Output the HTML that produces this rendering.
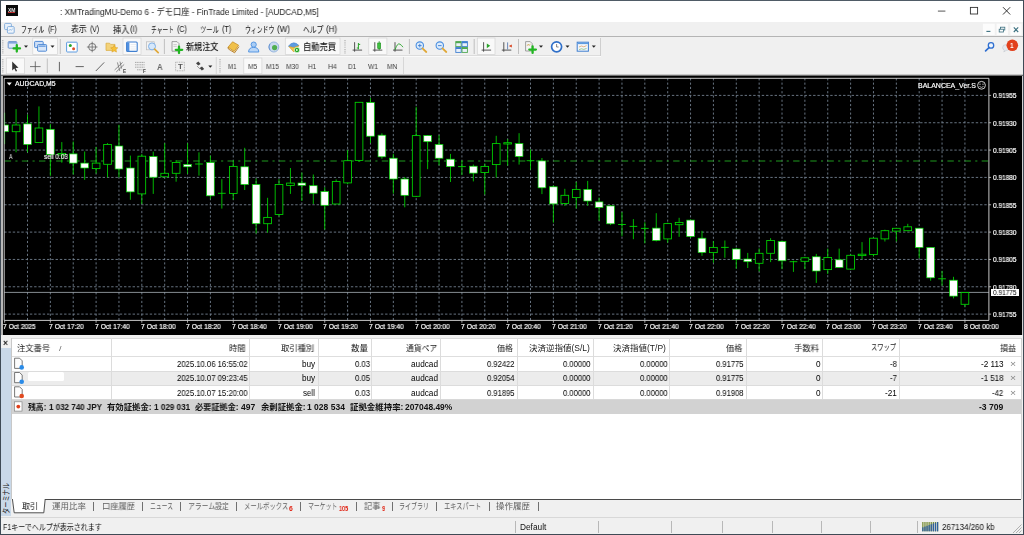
<!DOCTYPE html><html lang="ja"><head><meta charset="utf-8"><title>MT4</title><style>
html,body{margin:0;padding:0;background:#f0f0f0;}
#app{position:relative;width:1024px;height:535px;overflow:hidden;background:#f0f0f0;font-family:"Liberation Sans","Noto Sans CJK JP",sans-serif;-webkit-font-smoothing:antialiased;}
#app div{position:absolute;}
#app span.t{position:absolute;white-space:nowrap;transform-origin:0 50%;will-change:transform;}
</style></head><body><div id="app">
<div style="left:0.00px;top:0.00px;width:1024.00px;height:22.00px;background:#fff;"></div>
<div style="left:6.30px;top:5.00px;width:11.50px;height:11.30px;background:#0a0a0a;"></div>
<div style="left:8.40px;top:12.30px;width:7.00px;height:0.80px;background:#c03030;"></div>
<div style="left:0.00px;top:22.00px;width:1024.00px;height:14.30px;background:#f0f0f0;"></div>
<div style="left:0.00px;top:36.10px;width:1024.00px;height:0.90px;background:#b4b4b4;"></div>
<div style="left:0.00px;top:37.00px;width:1024.00px;height:39.00px;background:#f0f0f0;"></div>
<div style="left:0.00px;top:55.30px;width:600.50px;height:0.80px;background:#dcdcdc;"></div>
<div style="left:0.00px;top:56.10px;width:600.50px;height:0.70px;background:#fafafa;"></div>
<div style="left:600.30px;top:37.50px;width:0.80px;height:18.00px;background:#cfcfcf;"></div>
<div style="left:0.00px;top:74.40px;width:1024.00px;height:0.80px;background:#c8c8c8;"></div>
<div style="left:0.00px;top:75.10px;width:1024.00px;height:1.20px;background:#6e6e6e;"></div>
<div style="left:1.20px;top:76.00px;width:1.40px;height:259.00px;background:#b8b8b8;"></div>
<div style="left:2.50px;top:76.20px;width:1019.20px;height:258.70px;background:#000;"></div>
<svg width="1024" height="535" viewBox="0 0 1024 535" style="position:absolute;left:0;top:0">
<line x1="27.50" y1="78.30" x2="27.50" y2="320.40" stroke="#73808f" stroke-width="0.9" stroke-dasharray="2.14 2.14"/>
<line x1="50.37" y1="78.30" x2="50.37" y2="320.40" stroke="#73808f" stroke-width="0.9" stroke-dasharray="2.14 2.14"/>
<line x1="73.23" y1="78.30" x2="73.23" y2="320.40" stroke="#73808f" stroke-width="0.9" stroke-dasharray="2.14 2.14"/>
<line x1="96.10" y1="78.30" x2="96.10" y2="320.40" stroke="#73808f" stroke-width="0.9" stroke-dasharray="2.14 2.14"/>
<line x1="118.96" y1="78.30" x2="118.96" y2="320.40" stroke="#73808f" stroke-width="0.9" stroke-dasharray="2.14 2.14"/>
<line x1="141.82" y1="78.30" x2="141.82" y2="320.40" stroke="#73808f" stroke-width="0.9" stroke-dasharray="2.14 2.14"/>
<line x1="164.69" y1="78.30" x2="164.69" y2="320.40" stroke="#73808f" stroke-width="0.9" stroke-dasharray="2.14 2.14"/>
<line x1="187.55" y1="78.30" x2="187.55" y2="320.40" stroke="#73808f" stroke-width="0.9" stroke-dasharray="2.14 2.14"/>
<line x1="210.42" y1="78.30" x2="210.42" y2="320.40" stroke="#73808f" stroke-width="0.9" stroke-dasharray="2.14 2.14"/>
<line x1="233.28" y1="78.30" x2="233.28" y2="320.40" stroke="#73808f" stroke-width="0.9" stroke-dasharray="2.14 2.14"/>
<line x1="256.14" y1="78.30" x2="256.14" y2="320.40" stroke="#73808f" stroke-width="0.9" stroke-dasharray="2.14 2.14"/>
<line x1="279.01" y1="78.30" x2="279.01" y2="320.40" stroke="#73808f" stroke-width="0.9" stroke-dasharray="2.14 2.14"/>
<line x1="301.87" y1="78.30" x2="301.87" y2="320.40" stroke="#73808f" stroke-width="0.9" stroke-dasharray="2.14 2.14"/>
<line x1="324.74" y1="78.30" x2="324.74" y2="320.40" stroke="#73808f" stroke-width="0.9" stroke-dasharray="2.14 2.14"/>
<line x1="347.60" y1="78.30" x2="347.60" y2="320.40" stroke="#73808f" stroke-width="0.9" stroke-dasharray="2.14 2.14"/>
<line x1="370.46" y1="78.30" x2="370.46" y2="320.40" stroke="#73808f" stroke-width="0.9" stroke-dasharray="2.14 2.14"/>
<line x1="393.33" y1="78.30" x2="393.33" y2="320.40" stroke="#73808f" stroke-width="0.9" stroke-dasharray="2.14 2.14"/>
<line x1="416.19" y1="78.30" x2="416.19" y2="320.40" stroke="#73808f" stroke-width="0.9" stroke-dasharray="2.14 2.14"/>
<line x1="439.06" y1="78.30" x2="439.06" y2="320.40" stroke="#73808f" stroke-width="0.9" stroke-dasharray="2.14 2.14"/>
<line x1="461.92" y1="78.30" x2="461.92" y2="320.40" stroke="#73808f" stroke-width="0.9" stroke-dasharray="2.14 2.14"/>
<line x1="484.78" y1="78.30" x2="484.78" y2="320.40" stroke="#73808f" stroke-width="0.9" stroke-dasharray="2.14 2.14"/>
<line x1="507.65" y1="78.30" x2="507.65" y2="320.40" stroke="#73808f" stroke-width="0.9" stroke-dasharray="2.14 2.14"/>
<line x1="530.51" y1="78.30" x2="530.51" y2="320.40" stroke="#73808f" stroke-width="0.9" stroke-dasharray="2.14 2.14"/>
<line x1="553.38" y1="78.30" x2="553.38" y2="320.40" stroke="#73808f" stroke-width="0.9" stroke-dasharray="2.14 2.14"/>
<line x1="576.24" y1="78.30" x2="576.24" y2="320.40" stroke="#73808f" stroke-width="0.9" stroke-dasharray="2.14 2.14"/>
<line x1="599.10" y1="78.30" x2="599.10" y2="320.40" stroke="#73808f" stroke-width="0.9" stroke-dasharray="2.14 2.14"/>
<line x1="621.97" y1="78.30" x2="621.97" y2="320.40" stroke="#73808f" stroke-width="0.9" stroke-dasharray="2.14 2.14"/>
<line x1="644.83" y1="78.30" x2="644.83" y2="320.40" stroke="#73808f" stroke-width="0.9" stroke-dasharray="2.14 2.14"/>
<line x1="667.70" y1="78.30" x2="667.70" y2="320.40" stroke="#73808f" stroke-width="0.9" stroke-dasharray="2.14 2.14"/>
<line x1="690.56" y1="78.30" x2="690.56" y2="320.40" stroke="#73808f" stroke-width="0.9" stroke-dasharray="2.14 2.14"/>
<line x1="713.42" y1="78.30" x2="713.42" y2="320.40" stroke="#73808f" stroke-width="0.9" stroke-dasharray="2.14 2.14"/>
<line x1="736.29" y1="78.30" x2="736.29" y2="320.40" stroke="#73808f" stroke-width="0.9" stroke-dasharray="2.14 2.14"/>
<line x1="759.15" y1="78.30" x2="759.15" y2="320.40" stroke="#73808f" stroke-width="0.9" stroke-dasharray="2.14 2.14"/>
<line x1="782.02" y1="78.30" x2="782.02" y2="320.40" stroke="#73808f" stroke-width="0.9" stroke-dasharray="2.14 2.14"/>
<line x1="804.88" y1="78.30" x2="804.88" y2="320.40" stroke="#73808f" stroke-width="0.9" stroke-dasharray="2.14 2.14"/>
<line x1="827.74" y1="78.30" x2="827.74" y2="320.40" stroke="#73808f" stroke-width="0.9" stroke-dasharray="2.14 2.14"/>
<line x1="850.61" y1="78.30" x2="850.61" y2="320.40" stroke="#73808f" stroke-width="0.9" stroke-dasharray="2.14 2.14"/>
<line x1="873.47" y1="78.30" x2="873.47" y2="320.40" stroke="#73808f" stroke-width="0.9" stroke-dasharray="2.14 2.14"/>
<line x1="896.34" y1="78.30" x2="896.34" y2="320.40" stroke="#73808f" stroke-width="0.9" stroke-dasharray="2.14 2.14"/>
<line x1="919.20" y1="78.30" x2="919.20" y2="320.40" stroke="#73808f" stroke-width="0.9" stroke-dasharray="2.14 2.14"/>
<line x1="942.06" y1="78.30" x2="942.06" y2="320.40" stroke="#73808f" stroke-width="0.9" stroke-dasharray="2.14 2.14"/>
<line x1="964.93" y1="78.30" x2="964.93" y2="320.40" stroke="#73808f" stroke-width="0.9" stroke-dasharray="2.14 2.14"/>
<line x1="4.20" y1="95.40" x2="988.90" y2="95.40" stroke="#73808f" stroke-width="0.9" stroke-dasharray="2.4 1.88"/>
<line x1="988.90" y1="95.40" x2="991.10" y2="95.40" stroke="#d0d0d0" stroke-width="0.8"/>
<line x1="4.20" y1="122.74" x2="988.90" y2="122.74" stroke="#73808f" stroke-width="0.9" stroke-dasharray="2.4 1.88"/>
<line x1="988.90" y1="122.74" x2="991.10" y2="122.74" stroke="#d0d0d0" stroke-width="0.8"/>
<line x1="4.20" y1="150.08" x2="988.90" y2="150.08" stroke="#73808f" stroke-width="0.9" stroke-dasharray="2.4 1.88"/>
<line x1="988.90" y1="150.08" x2="991.10" y2="150.08" stroke="#d0d0d0" stroke-width="0.8"/>
<line x1="4.20" y1="177.42" x2="988.90" y2="177.42" stroke="#73808f" stroke-width="0.9" stroke-dasharray="2.4 1.88"/>
<line x1="988.90" y1="177.42" x2="991.10" y2="177.42" stroke="#d0d0d0" stroke-width="0.8"/>
<line x1="4.20" y1="204.76" x2="988.90" y2="204.76" stroke="#73808f" stroke-width="0.9" stroke-dasharray="2.4 1.88"/>
<line x1="988.90" y1="204.76" x2="991.10" y2="204.76" stroke="#d0d0d0" stroke-width="0.8"/>
<line x1="4.20" y1="232.10" x2="988.90" y2="232.10" stroke="#73808f" stroke-width="0.9" stroke-dasharray="2.4 1.88"/>
<line x1="988.90" y1="232.10" x2="991.10" y2="232.10" stroke="#d0d0d0" stroke-width="0.8"/>
<line x1="4.20" y1="259.44" x2="988.90" y2="259.44" stroke="#73808f" stroke-width="0.9" stroke-dasharray="2.4 1.88"/>
<line x1="988.90" y1="259.44" x2="991.10" y2="259.44" stroke="#d0d0d0" stroke-width="0.8"/>
<line x1="4.20" y1="286.78" x2="988.90" y2="286.78" stroke="#73808f" stroke-width="0.9" stroke-dasharray="2.4 1.88"/>
<line x1="988.90" y1="286.78" x2="991.10" y2="286.78" stroke="#d0d0d0" stroke-width="0.8"/>
<line x1="4.20" y1="314.12" x2="988.90" y2="314.12" stroke="#73808f" stroke-width="0.9" stroke-dasharray="2.4 1.88"/>
<line x1="988.90" y1="314.12" x2="991.10" y2="314.12" stroke="#d0d0d0" stroke-width="0.8"/>
<line x1="4.20" y1="160.95" x2="988.90" y2="160.95" stroke="#1f9a1f" stroke-width="1.1" stroke-dasharray="6.4 4.3 2.14 4.3" stroke-dashoffset="-0.5"/>
<line x1="4.20" y1="292.40" x2="988.90" y2="292.40" stroke="#a8b0b8" stroke-width="0.8"/>
<clipPath id="cp"><rect x="4.20" y="78.30" width="984.70" height="242.10"/></clipPath><g clip-path="url(#cp)">
<line x1="4.64" y1="112.70" x2="4.64" y2="144.10" stroke="#00d800" stroke-width="0.85"/>
<rect x="0.79" y="125.00" width="7.70" height="6.70" fill="#fff" stroke="#00d800" stroke-width="0.7"/>
<line x1="16.07" y1="109.10" x2="16.07" y2="152.30" stroke="#00d800" stroke-width="0.85"/>
<rect x="12.22" y="125.00" width="7.70" height="6.70" fill="#000" stroke="#00d800" stroke-width="0.85"/>
<line x1="27.50" y1="114.60" x2="27.50" y2="152.30" stroke="#00d800" stroke-width="0.85"/>
<rect x="23.65" y="123.90" width="7.70" height="20.60" fill="#fff" stroke="#00d800" stroke-width="0.7"/>
<line x1="38.94" y1="106.40" x2="38.94" y2="142.70" stroke="#00d800" stroke-width="0.85"/>
<rect x="35.09" y="128.00" width="7.70" height="14.50" fill="#000" stroke="#00d800" stroke-width="0.85"/>
<line x1="50.37" y1="124.00" x2="50.37" y2="175.90" stroke="#00d800" stroke-width="0.85"/>
<rect x="46.52" y="129.30" width="7.70" height="25.20" fill="#fff" stroke="#00d800" stroke-width="0.7"/>
<line x1="61.80" y1="142.10" x2="61.80" y2="162.70" stroke="#00d800" stroke-width="0.85"/>
<rect x="57.95" y="153.50" width="7.70" height="1.50" fill="#000" stroke="#00d800" stroke-width="0.85"/>
<line x1="73.23" y1="141.50" x2="73.23" y2="174.50" stroke="#00d800" stroke-width="0.85"/>
<rect x="69.38" y="153.90" width="7.70" height="9.20" fill="#fff" stroke="#00d800" stroke-width="0.7"/>
<line x1="84.66" y1="151.50" x2="84.66" y2="179.80" stroke="#00d800" stroke-width="0.85"/>
<rect x="80.81" y="163.10" width="7.70" height="4.90" fill="#fff" stroke="#00d800" stroke-width="0.7"/>
<line x1="96.10" y1="147.00" x2="96.10" y2="173.50" stroke="#00d800" stroke-width="0.85"/>
<rect x="92.25" y="163.10" width="7.70" height="5.50" fill="#000" stroke="#00d800" stroke-width="0.85"/>
<line x1="107.53" y1="143.10" x2="107.53" y2="177.40" stroke="#00d800" stroke-width="0.85"/>
<rect x="103.68" y="144.50" width="7.70" height="19.80" fill="#000" stroke="#00d800" stroke-width="0.85"/>
<line x1="118.96" y1="124.80" x2="118.96" y2="177.40" stroke="#00d800" stroke-width="0.85"/>
<rect x="115.11" y="146.00" width="7.70" height="23.00" fill="#fff" stroke="#00d800" stroke-width="0.7"/>
<line x1="130.39" y1="155.60" x2="130.39" y2="199.80" stroke="#00d800" stroke-width="0.85"/>
<rect x="126.54" y="168.00" width="7.70" height="23.90" fill="#fff" stroke="#00d800" stroke-width="0.7"/>
<line x1="141.82" y1="154.00" x2="141.82" y2="204.10" stroke="#00d800" stroke-width="0.85"/>
<rect x="137.97" y="156.20" width="7.70" height="37.70" fill="#000" stroke="#00d800" stroke-width="0.85"/>
<line x1="153.26" y1="151.70" x2="153.26" y2="193.90" stroke="#00d800" stroke-width="0.85"/>
<rect x="149.41" y="156.60" width="7.70" height="20.60" fill="#fff" stroke="#00d800" stroke-width="0.7"/>
<line x1="164.69" y1="143.20" x2="164.69" y2="177.20" stroke="#00d800" stroke-width="0.85"/>
<rect x="160.84" y="173.30" width="7.70" height="3.50" fill="#000" stroke="#00d800" stroke-width="0.85"/>
<line x1="176.12" y1="160.10" x2="176.12" y2="181.70" stroke="#00d800" stroke-width="0.85"/>
<rect x="172.27" y="162.50" width="7.70" height="10.80" fill="#000" stroke="#00d800" stroke-width="0.85"/>
<line x1="187.55" y1="143.20" x2="187.55" y2="173.90" stroke="#00d800" stroke-width="0.85"/>
<rect x="183.70" y="164.40" width="7.70" height="2.40" fill="#fff" stroke="#00d800" stroke-width="0.7"/>
<line x1="198.98" y1="152.30" x2="198.98" y2="175.60" stroke="#00d800" stroke-width="0.85"/>
<line x1="195.13" y1="164.00" x2="202.83" y2="164.00" stroke="#00d800" stroke-width="0.9"/>
<line x1="210.42" y1="155.60" x2="210.42" y2="198.80" stroke="#00d800" stroke-width="0.85"/>
<rect x="206.57" y="162.50" width="7.70" height="33.30" fill="#fff" stroke="#00d800" stroke-width="0.7"/>
<line x1="221.85" y1="179.20" x2="221.85" y2="208.60" stroke="#00d800" stroke-width="0.85"/>
<line x1="218.00" y1="193.30" x2="225.70" y2="193.30" stroke="#00d800" stroke-width="0.9"/>
<line x1="233.28" y1="160.50" x2="233.28" y2="199.80" stroke="#00d800" stroke-width="0.85"/>
<rect x="229.43" y="166.40" width="7.70" height="27.10" fill="#000" stroke="#00d800" stroke-width="0.85"/>
<line x1="244.71" y1="147.80" x2="244.71" y2="190.00" stroke="#00d800" stroke-width="0.85"/>
<rect x="240.86" y="166.80" width="7.70" height="17.70" fill="#fff" stroke="#00d800" stroke-width="0.7"/>
<line x1="256.14" y1="178.60" x2="256.14" y2="233.50" stroke="#00d800" stroke-width="0.85"/>
<rect x="252.29" y="184.50" width="7.70" height="39.20" fill="#fff" stroke="#00d800" stroke-width="0.7"/>
<line x1="267.58" y1="197.80" x2="267.58" y2="232.70" stroke="#00d800" stroke-width="0.85"/>
<rect x="263.73" y="217.40" width="7.70" height="6.30" fill="#000" stroke="#00d800" stroke-width="0.85"/>
<line x1="279.01" y1="179.20" x2="279.01" y2="216.50" stroke="#00d800" stroke-width="0.85"/>
<rect x="275.16" y="184.50" width="7.70" height="30.00" fill="#000" stroke="#00d800" stroke-width="0.85"/>
<line x1="290.44" y1="168.00" x2="290.44" y2="193.90" stroke="#00d800" stroke-width="0.85"/>
<rect x="286.59" y="183.10" width="7.70" height="2.30" fill="#000" stroke="#00d800" stroke-width="0.85"/>
<line x1="301.87" y1="172.50" x2="301.87" y2="201.00" stroke="#00d800" stroke-width="0.85"/>
<rect x="298.02" y="183.00" width="7.70" height="2.30" fill="#fff" stroke="#00d800" stroke-width="0.7"/>
<line x1="313.30" y1="174.50" x2="313.30" y2="204.00" stroke="#00d800" stroke-width="0.85"/>
<rect x="309.45" y="185.70" width="7.70" height="7.50" fill="#fff" stroke="#00d800" stroke-width="0.7"/>
<line x1="324.74" y1="187.30" x2="324.74" y2="229.50" stroke="#00d800" stroke-width="0.85"/>
<rect x="320.89" y="191.60" width="7.70" height="13.70" fill="#fff" stroke="#00d800" stroke-width="0.7"/>
<line x1="336.17" y1="179.40" x2="336.17" y2="204.00" stroke="#00d800" stroke-width="0.85"/>
<rect x="332.32" y="181.50" width="7.70" height="22.50" fill="#000" stroke="#00d800" stroke-width="0.85"/>
<line x1="347.60" y1="150.00" x2="347.60" y2="184.30" stroke="#00d800" stroke-width="0.85"/>
<rect x="343.75" y="160.70" width="7.70" height="22.20" fill="#000" stroke="#00d800" stroke-width="0.85"/>
<line x1="359.03" y1="102.30" x2="359.03" y2="161.70" stroke="#00d800" stroke-width="0.85"/>
<rect x="355.18" y="102.30" width="7.70" height="58.10" fill="#000" stroke="#00d800" stroke-width="0.85"/>
<line x1="370.46" y1="97.90" x2="370.46" y2="143.10" stroke="#00d800" stroke-width="0.85"/>
<rect x="366.61" y="102.50" width="7.70" height="33.70" fill="#fff" stroke="#00d800" stroke-width="0.7"/>
<line x1="381.90" y1="133.30" x2="381.90" y2="158.80" stroke="#00d800" stroke-width="0.85"/>
<rect x="378.05" y="135.20" width="7.70" height="21.60" fill="#fff" stroke="#00d800" stroke-width="0.7"/>
<line x1="393.33" y1="153.90" x2="393.33" y2="193.60" stroke="#00d800" stroke-width="0.85"/>
<rect x="389.48" y="158.20" width="7.70" height="20.80" fill="#fff" stroke="#00d800" stroke-width="0.7"/>
<line x1="404.76" y1="177.00" x2="404.76" y2="207.30" stroke="#00d800" stroke-width="0.85"/>
<rect x="400.91" y="179.00" width="7.70" height="16.30" fill="#fff" stroke="#00d800" stroke-width="0.7"/>
<line x1="416.19" y1="106.80" x2="416.19" y2="197.10" stroke="#00d800" stroke-width="0.85"/>
<rect x="412.34" y="135.60" width="7.70" height="60.70" fill="#000" stroke="#00d800" stroke-width="0.85"/>
<line x1="427.62" y1="135.20" x2="427.62" y2="169.20" stroke="#00d800" stroke-width="0.85"/>
<rect x="423.77" y="135.60" width="7.70" height="6.10" fill="#fff" stroke="#00d800" stroke-width="0.7"/>
<line x1="439.06" y1="135.20" x2="439.06" y2="165.30" stroke="#00d800" stroke-width="0.85"/>
<rect x="435.21" y="144.50" width="7.70" height="13.70" fill="#fff" stroke="#00d800" stroke-width="0.7"/>
<line x1="450.49" y1="153.90" x2="450.49" y2="182.00" stroke="#00d800" stroke-width="0.85"/>
<rect x="446.64" y="159.20" width="7.70" height="7.40" fill="#fff" stroke="#00d800" stroke-width="0.7"/>
<line x1="461.92" y1="160.80" x2="461.92" y2="175.10" stroke="#00d800" stroke-width="0.85"/>
<line x1="458.07" y1="166.60" x2="465.77" y2="166.60" stroke="#00d800" stroke-width="0.9"/>
<line x1="473.35" y1="164.50" x2="473.35" y2="181.40" stroke="#00d800" stroke-width="0.85"/>
<rect x="469.50" y="166.20" width="7.70" height="6.90" fill="#fff" stroke="#00d800" stroke-width="0.7"/>
<line x1="484.78" y1="163.50" x2="484.78" y2="194.50" stroke="#00d800" stroke-width="0.85"/>
<rect x="480.93" y="166.40" width="7.70" height="6.10" fill="#000" stroke="#00d800" stroke-width="0.85"/>
<line x1="496.22" y1="135.80" x2="496.22" y2="177.60" stroke="#00d800" stroke-width="0.85"/>
<rect x="492.37" y="143.60" width="7.70" height="21.00" fill="#000" stroke="#00d800" stroke-width="0.85"/>
<line x1="507.65" y1="139.10" x2="507.65" y2="165.60" stroke="#00d800" stroke-width="0.85"/>
<rect x="503.80" y="142.70" width="7.70" height="1.30" fill="#000" stroke="#00d800" stroke-width="0.85"/>
<line x1="519.08" y1="133.20" x2="519.08" y2="164.60" stroke="#00d800" stroke-width="0.85"/>
<rect x="515.23" y="143.60" width="7.70" height="12.80" fill="#fff" stroke="#00d800" stroke-width="0.7"/>
<line x1="530.51" y1="149.50" x2="530.51" y2="169.70" stroke="#00d800" stroke-width="0.85"/>
<line x1="526.66" y1="160.70" x2="534.36" y2="160.70" stroke="#00d800" stroke-width="0.9"/>
<line x1="541.94" y1="158.00" x2="541.94" y2="194.10" stroke="#00d800" stroke-width="0.85"/>
<rect x="538.09" y="160.90" width="7.70" height="26.90" fill="#fff" stroke="#00d800" stroke-width="0.7"/>
<line x1="553.38" y1="185.50" x2="553.38" y2="222.70" stroke="#00d800" stroke-width="0.85"/>
<rect x="549.53" y="186.80" width="7.70" height="17.10" fill="#fff" stroke="#00d800" stroke-width="0.7"/>
<line x1="564.81" y1="188.80" x2="564.81" y2="205.90" stroke="#00d800" stroke-width="0.85"/>
<rect x="560.96" y="195.30" width="7.70" height="8.20" fill="#000" stroke="#00d800" stroke-width="0.85"/>
<line x1="576.24" y1="181.90" x2="576.24" y2="208.40" stroke="#00d800" stroke-width="0.85"/>
<rect x="572.39" y="189.40" width="7.70" height="8.20" fill="#000" stroke="#00d800" stroke-width="0.85"/>
<line x1="587.67" y1="180.90" x2="587.67" y2="205.90" stroke="#00d800" stroke-width="0.85"/>
<rect x="583.82" y="189.40" width="7.70" height="11.60" fill="#fff" stroke="#00d800" stroke-width="0.7"/>
<line x1="599.10" y1="197.60" x2="599.10" y2="220.80" stroke="#00d800" stroke-width="0.85"/>
<rect x="595.25" y="201.90" width="7.70" height="5.50" fill="#fff" stroke="#00d800" stroke-width="0.7"/>
<line x1="610.54" y1="205.10" x2="610.54" y2="225.10" stroke="#00d800" stroke-width="0.85"/>
<rect x="606.69" y="205.90" width="7.70" height="17.90" fill="#fff" stroke="#00d800" stroke-width="0.7"/>
<line x1="621.97" y1="212.10" x2="621.97" y2="236.20" stroke="#00d800" stroke-width="0.85"/>
<line x1="618.12" y1="224.50" x2="625.82" y2="224.50" stroke="#00d800" stroke-width="0.9"/>
<line x1="633.40" y1="219.10" x2="633.40" y2="239.20" stroke="#00d800" stroke-width="0.85"/>
<line x1="629.55" y1="226.40" x2="637.25" y2="226.40" stroke="#00d800" stroke-width="0.9"/>
<line x1="644.83" y1="222.30" x2="644.83" y2="243.30" stroke="#00d800" stroke-width="0.85"/>
<line x1="640.98" y1="228.40" x2="648.68" y2="228.40" stroke="#00d800" stroke-width="0.9"/>
<line x1="656.26" y1="213.20" x2="656.26" y2="241.40" stroke="#00d800" stroke-width="0.85"/>
<rect x="652.41" y="228.10" width="7.70" height="12.30" fill="#fff" stroke="#00d800" stroke-width="0.7"/>
<line x1="667.70" y1="222.70" x2="667.70" y2="242.70" stroke="#00d800" stroke-width="0.85"/>
<rect x="663.85" y="223.60" width="7.70" height="15.30" fill="#000" stroke="#00d800" stroke-width="0.85"/>
<line x1="679.13" y1="217.80" x2="679.13" y2="236.80" stroke="#00d800" stroke-width="0.85"/>
<rect x="675.28" y="222.40" width="7.70" height="2.30" fill="#000" stroke="#00d800" stroke-width="0.85"/>
<line x1="690.56" y1="219.50" x2="690.56" y2="238.00" stroke="#00d800" stroke-width="0.85"/>
<rect x="686.71" y="220.10" width="7.70" height="16.40" fill="#fff" stroke="#00d800" stroke-width="0.7"/>
<line x1="701.99" y1="230.80" x2="701.99" y2="255.80" stroke="#00d800" stroke-width="0.85"/>
<rect x="698.14" y="238.20" width="7.70" height="14.30" fill="#fff" stroke="#00d800" stroke-width="0.7"/>
<line x1="713.42" y1="241.10" x2="713.42" y2="262.70" stroke="#00d800" stroke-width="0.85"/>
<rect x="709.57" y="247.40" width="7.70" height="5.20" fill="#000" stroke="#00d800" stroke-width="0.85"/>
<line x1="724.86" y1="240.50" x2="724.86" y2="257.80" stroke="#00d800" stroke-width="0.85"/>
<line x1="721.01" y1="247.40" x2="728.71" y2="247.40" stroke="#00d800" stroke-width="0.9"/>
<line x1="736.29" y1="248.00" x2="736.29" y2="268.60" stroke="#00d800" stroke-width="0.85"/>
<rect x="732.44" y="249.00" width="7.70" height="10.40" fill="#fff" stroke="#00d800" stroke-width="0.7"/>
<line x1="747.72" y1="252.90" x2="747.72" y2="268.00" stroke="#00d800" stroke-width="0.85"/>
<rect x="743.87" y="259.00" width="7.70" height="2.70" fill="#fff" stroke="#00d800" stroke-width="0.7"/>
<line x1="759.15" y1="248.40" x2="759.15" y2="271.50" stroke="#00d800" stroke-width="0.85"/>
<rect x="755.30" y="253.30" width="7.70" height="10.00" fill="#000" stroke="#00d800" stroke-width="0.85"/>
<line x1="770.58" y1="238.20" x2="770.58" y2="262.10" stroke="#00d800" stroke-width="0.85"/>
<rect x="766.73" y="240.50" width="7.70" height="12.80" fill="#000" stroke="#00d800" stroke-width="0.85"/>
<line x1="782.02" y1="240.50" x2="782.02" y2="269.20" stroke="#00d800" stroke-width="0.85"/>
<rect x="778.17" y="241.50" width="7.70" height="19.30" fill="#fff" stroke="#00d800" stroke-width="0.7"/>
<line x1="793.45" y1="260.80" x2="793.45" y2="271.90" stroke="#00d800" stroke-width="0.85"/>
<line x1="789.60" y1="261.70" x2="797.30" y2="261.70" stroke="#00d800" stroke-width="0.9"/>
<line x1="804.88" y1="256.80" x2="804.88" y2="269.20" stroke="#00d800" stroke-width="0.85"/>
<rect x="801.03" y="257.80" width="7.70" height="3.50" fill="#000" stroke="#00d800" stroke-width="0.85"/>
<line x1="816.31" y1="253.90" x2="816.31" y2="282.90" stroke="#00d800" stroke-width="0.85"/>
<rect x="812.46" y="256.80" width="7.70" height="14.20" fill="#fff" stroke="#00d800" stroke-width="0.7"/>
<line x1="827.74" y1="248.60" x2="827.74" y2="274.00" stroke="#00d800" stroke-width="0.85"/>
<rect x="823.89" y="257.50" width="7.70" height="12.10" fill="#000" stroke="#00d800" stroke-width="0.85"/>
<line x1="839.18" y1="248.60" x2="839.18" y2="267.60" stroke="#00d800" stroke-width="0.85"/>
<rect x="835.33" y="259.80" width="7.70" height="7.60" fill="#fff" stroke="#00d800" stroke-width="0.7"/>
<line x1="850.61" y1="254.30" x2="850.61" y2="270.00" stroke="#00d800" stroke-width="0.85"/>
<rect x="846.76" y="255.30" width="7.70" height="13.80" fill="#000" stroke="#00d800" stroke-width="0.85"/>
<line x1="862.04" y1="242.10" x2="862.04" y2="259.20" stroke="#00d800" stroke-width="0.85"/>
<rect x="858.19" y="254.20" width="7.70" height="1.40" fill="#000" stroke="#00d800" stroke-width="0.85"/>
<line x1="873.47" y1="237.60" x2="873.47" y2="256.60" stroke="#00d800" stroke-width="0.85"/>
<rect x="869.62" y="238.20" width="7.70" height="16.40" fill="#000" stroke="#00d800" stroke-width="0.85"/>
<line x1="884.90" y1="229.70" x2="884.90" y2="241.50" stroke="#00d800" stroke-width="0.85"/>
<rect x="881.05" y="230.70" width="7.70" height="8.20" fill="#000" stroke="#00d800" stroke-width="0.85"/>
<line x1="896.34" y1="227.80" x2="896.34" y2="241.50" stroke="#00d800" stroke-width="0.85"/>
<rect x="892.49" y="228.30" width="7.70" height="2.80" fill="#000" stroke="#00d800" stroke-width="0.85"/>
<line x1="907.77" y1="223.80" x2="907.77" y2="231.10" stroke="#00d800" stroke-width="0.85"/>
<rect x="903.92" y="226.80" width="7.70" height="3.90" fill="#000" stroke="#00d800" stroke-width="0.85"/>
<line x1="919.20" y1="227.80" x2="919.20" y2="258.20" stroke="#00d800" stroke-width="0.85"/>
<rect x="915.35" y="228.20" width="7.70" height="19.20" fill="#fff" stroke="#00d800" stroke-width="0.7"/>
<line x1="930.63" y1="247.00" x2="930.63" y2="280.70" stroke="#00d800" stroke-width="0.85"/>
<rect x="926.78" y="247.40" width="7.70" height="30.40" fill="#fff" stroke="#00d800" stroke-width="0.7"/>
<line x1="942.06" y1="270.90" x2="942.06" y2="285.70" stroke="#00d800" stroke-width="0.85"/>
<line x1="938.21" y1="278.80" x2="945.91" y2="278.80" stroke="#00d800" stroke-width="0.9"/>
<line x1="953.50" y1="276.80" x2="953.50" y2="298.40" stroke="#00d800" stroke-width="0.85"/>
<rect x="949.65" y="280.20" width="7.70" height="15.90" fill="#fff" stroke="#00d800" stroke-width="0.7"/>
<line x1="964.93" y1="292.10" x2="964.93" y2="306.90" stroke="#00d800" stroke-width="0.85"/>
<rect x="961.08" y="292.50" width="7.70" height="11.80" fill="#000" stroke="#00d800" stroke-width="0.85"/>
</g>
<rect x="12.8" y="153.5" width="31" height="6.6" fill="#000"/>
<path d="M4.20 320.40 V78.30 H988.90 V320.40 Z" fill="none" stroke="#dcdcdc" stroke-width="0.9"/>
<line x1="4.64" y1="320.40" x2="4.64" y2="322.70" stroke="#d0d0d0" stroke-width="0.8"/>
<line x1="50.37" y1="320.40" x2="50.37" y2="322.70" stroke="#d0d0d0" stroke-width="0.8"/>
<line x1="96.10" y1="320.40" x2="96.10" y2="322.70" stroke="#d0d0d0" stroke-width="0.8"/>
<line x1="141.82" y1="320.40" x2="141.82" y2="322.70" stroke="#d0d0d0" stroke-width="0.8"/>
<line x1="187.55" y1="320.40" x2="187.55" y2="322.70" stroke="#d0d0d0" stroke-width="0.8"/>
<line x1="233.28" y1="320.40" x2="233.28" y2="322.70" stroke="#d0d0d0" stroke-width="0.8"/>
<line x1="279.01" y1="320.40" x2="279.01" y2="322.70" stroke="#d0d0d0" stroke-width="0.8"/>
<line x1="324.74" y1="320.40" x2="324.74" y2="322.70" stroke="#d0d0d0" stroke-width="0.8"/>
<line x1="370.46" y1="320.40" x2="370.46" y2="322.70" stroke="#d0d0d0" stroke-width="0.8"/>
<line x1="416.19" y1="320.40" x2="416.19" y2="322.70" stroke="#d0d0d0" stroke-width="0.8"/>
<line x1="461.92" y1="320.40" x2="461.92" y2="322.70" stroke="#d0d0d0" stroke-width="0.8"/>
<line x1="507.65" y1="320.40" x2="507.65" y2="322.70" stroke="#d0d0d0" stroke-width="0.8"/>
<line x1="553.38" y1="320.40" x2="553.38" y2="322.70" stroke="#d0d0d0" stroke-width="0.8"/>
<line x1="599.10" y1="320.40" x2="599.10" y2="322.70" stroke="#d0d0d0" stroke-width="0.8"/>
<line x1="644.83" y1="320.40" x2="644.83" y2="322.70" stroke="#d0d0d0" stroke-width="0.8"/>
<line x1="690.56" y1="320.40" x2="690.56" y2="322.70" stroke="#d0d0d0" stroke-width="0.8"/>
<line x1="736.29" y1="320.40" x2="736.29" y2="322.70" stroke="#d0d0d0" stroke-width="0.8"/>
<line x1="782.02" y1="320.40" x2="782.02" y2="322.70" stroke="#d0d0d0" stroke-width="0.8"/>
<line x1="827.74" y1="320.40" x2="827.74" y2="322.70" stroke="#d0d0d0" stroke-width="0.8"/>
<line x1="873.47" y1="320.40" x2="873.47" y2="322.70" stroke="#d0d0d0" stroke-width="0.8"/>
<line x1="919.20" y1="320.40" x2="919.20" y2="322.70" stroke="#d0d0d0" stroke-width="0.8"/>
<line x1="964.93" y1="320.40" x2="964.93" y2="322.70" stroke="#d0d0d0" stroke-width="0.8"/>
<path d="M6.8 82.6 H11.8 L9.3 85.6 Z" fill="#fff"/>
<circle cx="981.5" cy="85.3" r="3.9" fill="none" stroke="#e0e0e0" stroke-width="0.9"/>
<circle cx="980" cy="84.2" r="0.6" fill="#e0e0e0"/><circle cx="983" cy="84.2" r="0.6" fill="#e0e0e0"/>
<path d="M979.4 86.4 Q981.5 88.4 983.6 86.4" fill="none" stroke="#e0e0e0" stroke-width="0.7"/>
</svg>
<div style="left:990.80px;top:288.50px;width:27.90px;height:7.80px;background:#fff;"></div>
<div style="left:0.00px;top:334.90px;width:1024.00px;height:3.30px;background:#f0f0f0;"></div>
<div style="left:1.20px;top:338.00px;width:10.10px;height:177.50px;background:#c9d8e8;"></div>
<div style="left:1.20px;top:338.00px;width:10.10px;height:10.00px;background:#f0f0f0;"></div>
<div style="left:11.30px;top:338.20px;width:1009.70px;height:161.00px;background:#fff;"></div>
<div style="left:11.30px;top:338.20px;width:1009.70px;height:0.70px;background:#dadada;"></div>
<div style="left:11.30px;top:356.00px;width:1009.70px;height:0.80px;background:#dedede;"></div>
<div style="left:11.30px;top:370.90px;width:1009.70px;height:14.30px;background:#ececec;"></div>
<div style="left:11.30px;top:399.50px;width:1009.70px;height:14.10px;background:#d2d2d2;"></div>
<div style="left:11.30px;top:370.60px;width:1009.70px;height:0.70px;background:#dcdcdc;"></div>
<div style="left:11.30px;top:384.90px;width:1009.70px;height:0.70px;background:#dcdcdc;"></div>
<div style="left:11.30px;top:399.10px;width:1009.70px;height:0.70px;background:#d8d8d8;"></div>
<div style="left:110.60px;top:338.40px;width:0.80px;height:61.10px;background:#dcdcdc;"></div>
<div style="left:249.10px;top:338.40px;width:0.80px;height:61.10px;background:#dcdcdc;"></div>
<div style="left:317.60px;top:338.40px;width:0.80px;height:61.10px;background:#dcdcdc;"></div>
<div style="left:370.90px;top:338.40px;width:0.80px;height:61.10px;background:#dcdcdc;"></div>
<div style="left:439.60px;top:338.40px;width:0.80px;height:61.10px;background:#dcdcdc;"></div>
<div style="left:516.60px;top:338.40px;width:0.80px;height:61.10px;background:#dcdcdc;"></div>
<div style="left:593.10px;top:338.40px;width:0.80px;height:61.10px;background:#dcdcdc;"></div>
<div style="left:669.20px;top:338.40px;width:0.80px;height:61.10px;background:#dcdcdc;"></div>
<div style="left:745.90px;top:338.40px;width:0.80px;height:61.10px;background:#dcdcdc;"></div>
<div style="left:822.20px;top:338.40px;width:0.80px;height:61.10px;background:#dcdcdc;"></div>
<div style="left:898.50px;top:338.40px;width:0.80px;height:61.10px;background:#dcdcdc;"></div>
<div style="left:11.00px;top:338.20px;width:0.70px;height:161.00px;background:#c8c8c8;"></div>
<div style="left:1020.80px;top:338.20px;width:0.70px;height:161.00px;background:#d0d0d0;"></div>
<div style="left:28.00px;top:372.20px;width:35.50px;height:9.00px;background:#fff;border-radius:1.5px;"></div>
<svg width="1024" height="535" viewBox="0 0 1024 535" style="position:absolute;left:0;top:0">
<path d="M14.6 358.20 h5 l2.6 2.6 v7.6 h-7.6 z" fill="#fdfdfd" stroke="#555" stroke-width="0.8"/>
<circle cx="21.7" cy="367.40" r="2.3" fill="#2a8be8"/>
<path d="M14.6 372.50 h5 l2.6 2.6 v7.6 h-7.6 z" fill="#fdfdfd" stroke="#555" stroke-width="0.8"/>
<circle cx="21.7" cy="381.70" r="2.3" fill="#2a8be8"/>
<path d="M14.6 386.80 h5 l2.6 2.6 v7.6 h-7.6 z" fill="#fdfdfd" stroke="#555" stroke-width="0.8"/>
<circle cx="21.7" cy="396.00" r="2.3" fill="#e04a20"/>
<rect x="14.6" y="401.80" width="7.4" height="9.3" fill="#fff" stroke="#888" stroke-width="0.7"/>
<circle cx="18.3" cy="406.60" r="1.9" fill="#e0401c"/>
</svg>
<div style="left:45.00px;top:499.10px;width:976.00px;height:0.90px;background:#4a4a4a;"></div>
<div style="left:11.30px;top:500.00px;width:1009.70px;height:15.50px;background:#f0f0f0;"></div>
<div style="left:0.00px;top:515.50px;width:1024.00px;height:20.00px;background:#f0f0f0;"></div>
<div style="left:0.00px;top:517.00px;width:1024.00px;height:0.80px;background:#d8d8d8;"></div>
<svg width="1024" height="535" viewBox="0 0 1024 535" style="position:absolute;left:0;top:0"><path d="M12.4 498.6 L14.2 512.8 H43.8 L45.2 498.6 Z" fill="#fff"/><path d="M12.4 499 L14.2 512.8 H43.8 L45.2 499" fill="none" stroke="#3c3c3c" stroke-width="0.9"/></svg>
<div style="left:93.30px;top:501.50px;width:0.80px;height:9.60px;background:#707070;"></div>
<div style="left:142.10px;top:501.50px;width:0.80px;height:9.60px;background:#707070;"></div>
<div style="left:180.20px;top:501.50px;width:0.80px;height:9.60px;background:#707070;"></div>
<div style="left:235.90px;top:501.50px;width:0.80px;height:9.60px;background:#707070;"></div>
<div style="left:300.10px;top:501.50px;width:0.80px;height:9.60px;background:#707070;"></div>
<div style="left:356.10px;top:501.50px;width:0.80px;height:9.60px;background:#707070;"></div>
<div style="left:392.40px;top:501.50px;width:0.80px;height:9.60px;background:#707070;"></div>
<div style="left:436.40px;top:501.50px;width:0.80px;height:9.60px;background:#707070;"></div>
<div style="left:488.60px;top:501.50px;width:0.80px;height:9.60px;background:#707070;"></div>
<div style="left:537.60px;top:501.50px;width:0.80px;height:9.60px;background:#707070;"></div>
<div id="vt" style="left:-13.8px;top:492.5px;width:40px;height:11px;line-height:11px;font-size:8px;color:#222;text-align:center;transform:rotate(-90deg) scaleX(0.78);transform-origin:center center;white-space:nowrap">ターミナル</div>
<div style="left:515.10px;top:520.80px;width:0.80px;height:12.20px;background:#b8b8b8;"></div>
<div style="left:597.90px;top:520.80px;width:0.80px;height:12.20px;background:#b8b8b8;"></div>
<div style="left:670.90px;top:520.80px;width:0.80px;height:12.20px;background:#b8b8b8;"></div>
<div style="left:721.60px;top:520.80px;width:0.80px;height:12.20px;background:#b8b8b8;"></div>
<div style="left:772.10px;top:520.80px;width:0.80px;height:12.20px;background:#b8b8b8;"></div>
<div style="left:820.90px;top:520.80px;width:0.80px;height:12.20px;background:#b8b8b8;"></div>
<div style="left:870.10px;top:520.80px;width:0.80px;height:12.20px;background:#b8b8b8;"></div>
<div style="left:916.90px;top:520.80px;width:0.80px;height:12.20px;background:#b8b8b8;"></div>
<div style="left:0.00px;top:0.00px;width:1024.00px;height:0.80px;background:#4f5b66;"></div>
<div style="left:0.00px;top:0.00px;width:1.20px;height:535.00px;background:#3f4a55;"></div>
<div style="left:1021.70px;top:76.00px;width:1.00px;height:259.00px;background:#d0d0d0;"></div>
<div style="left:1022.70px;top:0.00px;width:1.30px;height:535.00px;background:#3f4a55;"></div>
<div style="left:0.00px;top:533.70px;width:1024.00px;height:1.30px;background:#3f4a55;"></div>
<svg width="1024" height="535" viewBox="0 0 1024 535" style="position:absolute;left:0;top:0">
<rect x="4.6" y="23.4" width="6.8" height="6.2" rx="1" fill="#e8f1fb" stroke="#6f9fd6" stroke-width="0.8"/>
<rect x="7.4" y="26.6" width="6.8" height="6.6" rx="1" fill="#eef5fc" stroke="#6f9fd6" stroke-width="0.8"/>
<path d="M8.6 31 l1.5 -1.8 l1.2 1.2 l1.6 -2" stroke="#6f9fd6" stroke-width="0.6" fill="none"/>
<line x1="2.80" y1="40.00" x2="2.80" y2="54.00" stroke="#b0b0b0" stroke-width="1.2" stroke-dasharray="0.9 0.9"/>
<rect x="8.2" y="41.6" width="8.6" height="6.6" rx="0.8" fill="#dfeafa" stroke="#4f7fc4" stroke-width="0.8"/>
<rect x="8.6" y="42" width="7.8" height="1.6" fill="#7fa6dd"/>
<path d="M13.60 48.40 h6.40 M16.80 45.20 v6.40" stroke="#22b522" stroke-width="2.3" stroke-linecap="round"/>
<path d="M24.00 45.50 h4 l-2 2.3 z" fill="#222"/>
<rect x="32.80" y="38.00" width="24.70" height="16.40" fill="#f9f9f9" stroke="#d4d4d4" stroke-width="0.7"/>
<rect x="34.6" y="41.4" width="8.6" height="6.2" rx="0.8" fill="#cfe0f7" stroke="#3f7fd0" stroke-width="0.9"/>
<rect x="37.6" y="44.6" width="9" height="6.6" rx="0.8" fill="#d9e7f9" stroke="#3f7fd0" stroke-width="0.9"/>
<rect x="38.6" y="45.5" width="7" height="1.4" fill="#6fa0e0"/>
<path d="M50.50 45.50 h4 l-2 2.3 z" fill="#222"/>
<line x1="60.30" y1="39.00" x2="60.30" y2="54.00" stroke="#b4b4b4" stroke-width="0.8"/>
<rect x="66.6" y="42.2" width="10.6" height="9.8" rx="0.8" fill="#fff" stroke="#5c9be0" stroke-width="1"/>
<circle cx="70.3" cy="45.6" r="1.5" fill="#2aa52a"/><circle cx="73.6" cy="48.8" r="1.5" fill="#e0502a"/>
<circle cx="92.2" cy="47" r="3.6" fill="none" stroke="#6a6a6a" stroke-width="0.9"/>
<path d="M86.9 47 h10.6 M92.2 41.7 v10.6" stroke="#6a6a6a" stroke-width="0.8"/>
<path d="M106 43.2 h3.6 l1 1.2 h4.4 v6 h-9 z" fill="#f3d27a" stroke="#d8ab3c" stroke-width="0.7"/>
<path d="M114.2 45.2 l1.1 2.3 2.5 .3 -1.8 1.8 .5 2.5 -2.3 -1.2 -2.3 1.2 .5 -2.5 -1.8 -1.8 2.5 -.3z" fill="#f6c23a" stroke="#d99a1c" stroke-width="0.5"/>
<rect x="123.00" y="38.00" width="18.00" height="16.40" fill="#f9f9f9" stroke="#d4d4d4" stroke-width="0.7"/>
<rect x="126.6" y="42" width="10.6" height="9.4" rx="1" fill="#fff" stroke="#3f7fd0" stroke-width="1.1"/>
<rect x="127" y="42.4" width="2.4" height="8.6" fill="#4f8fe0"/>
<path d="M130.5 44.6 h5.5 M130.5 46.8 h5.5 M130.5 49 h5.5" stroke="#d6dfea" stroke-width="0.6"/>
<rect x="146.6" y="41.8" width="7.6" height="8" fill="#f4f4f4" stroke="#b8b8b8" stroke-width="0.7"/>
<circle cx="152" cy="46.4" r="3.5" fill="#d6e8fb" stroke="#7fb0e6" stroke-width="1"/>
<path d="M154.6 49.2 l3.6 3.4" stroke="#e0a838" stroke-width="1.7" stroke-linecap="round"/>
<line x1="164.40" y1="39.00" x2="164.40" y2="54.00" stroke="#b4b4b4" stroke-width="0.8"/>
<path d="M172 41.6 h5 l2 2 v7.6 h-7 z" fill="#f4f4f4" stroke="#8a8a8a" stroke-width="0.8"/>
<path d="M173.4 44.6 h3.4 M173.4 46.4 h3.4" stroke="#b0b0b0" stroke-width="0.6"/>
<path d="M175.80 49.80 h6.40 M179.00 46.60 v6.40" stroke="#22b522" stroke-width="2.3" stroke-linecap="round"/>
<path d="M228 47.2 l4.6 -5.4 l6 3.4 l-4.4 6.2 z" fill="#f0c04a" stroke="#c8902a" stroke-width="0.8"/>
<path d="M228 47.2 l.4 1.8 l6.2 3.8 l4.4 -6.2" fill="none" stroke="#b87a1a" stroke-width="0.9"/>
<circle cx="253.7" cy="44.6" r="2.6" fill="#a9cdf5" stroke="#4a8fe0" stroke-width="0.9"/>
<path d="M248.6 52 q0 -4.6 5.1 -4.6 q5.1 0 5.1 4.6 z" fill="#b9d6f7" stroke="#4a8fe0" stroke-width="0.9"/>
<circle cx="273.8" cy="47" r="5" fill="#c9d9ee" stroke="#8fb0dc" stroke-width="0.9"/>
<circle cx="274.6" cy="47.6" r="2.6" fill="#4fae4f"/>
<path d="M270 43.8 q-2 3.2 0 6.4" stroke="#5f8fd0" stroke-width="0.8" fill="none"/>
<rect x="285.30" y="38.00" width="54.70" height="16.40" fill="#f9f9f9" stroke="#d4d4d4" stroke-width="0.7"/>
<path d="M288.4 46.2 q5.2 -6.4 10.6 -.6 l-5.2 2.2 z" fill="#5c9be0" stroke="#3f7fd0" stroke-width="0.6"/>
<path d="M289 46.6 l4.8 5.4 l5 -6.4 l-5 2 z" fill="#f0c54a" stroke="#cf9a2a" stroke-width="0.6"/>
<circle cx="297" cy="50" r="2.7" fill="#22a822" stroke="#fff" stroke-width="0.6"/>
<path d="M296.2 48.7 l2.1 1.3 l-2.1 1.3 z" fill="#fff"/>
<line x1="345.00" y1="40.00" x2="345.00" y2="54.00" stroke="#b0b0b0" stroke-width="1.2" stroke-dasharray="0.9 0.9"/>
<path d="M354.60 42.20 v9.50 M352.60 50.10 h9.50" stroke="#444" stroke-width="0.9" fill="none"/>
<path d="M358.4 43 v6.4 M358.4 44.4 h1.8 M358.4 48 h-1.6" stroke="#2aa52a" stroke-width="1" fill="none"/>
<rect x="368.80" y="38.00" width="18.10" height="16.40" fill="#f9f9f9" stroke="#d4d4d4" stroke-width="0.7"/>
<path d="M374.80 42.20 v9.50 M372.80 50.10 h9.50" stroke="#444" stroke-width="0.9" fill="none"/>
<path d="M379.2 41.2 v9" stroke="#1f8f1f" stroke-width="0.8"/><rect x="377.7" y="43" width="3" height="5.6" fill="#3fc03f" stroke="#1f8f1f" stroke-width="0.6"/>
<path d="M395.00 42.20 v9.50 M393.00 50.10 h9.50" stroke="#444" stroke-width="0.9" fill="none"/>
<path d="M395 50 q2.4 -7.6 5 -5.8 q1.6 1 3 3" stroke="#2aa52a" stroke-width="0.9" fill="none"/>
<line x1="409.40" y1="39.00" x2="409.40" y2="54.00" stroke="#b4b4b4" stroke-width="0.8"/>
<circle cx="419.80" cy="45.6" r="3.7" fill="#dcebfb" stroke="#4a8fe0" stroke-width="1.1"/>
<path d="M422.50 48.4 l3.8 3.6" stroke="#e0a838" stroke-width="1.8" stroke-linecap="round"/>
<path d="M418.00 45.6 h3.6" stroke="#3f7fd0" stroke-width="0.9"/>
<path d="M419.80 43.8 v3.6" stroke="#3f7fd0" stroke-width="0.9"/>
<circle cx="439.80" cy="45.6" r="3.7" fill="#dcebfb" stroke="#4a8fe0" stroke-width="1.1"/>
<path d="M442.50 48.4 l3.8 3.6" stroke="#e0a838" stroke-width="1.8" stroke-linecap="round"/>
<path d="M438.00 45.6 h3.6" stroke="#3f7fd0" stroke-width="0.9"/>
<rect x="455.80" y="41.60" width="5.4" height="5" fill="#eaf1fa" stroke="#4fa84f" stroke-width="0.9"/>
<rect x="455.80" y="41.60" width="5.4" height="1.6" fill="#4fa84f"/>
<rect x="462.00" y="41.60" width="5.4" height="5" fill="#eaf1fa" stroke="#3f7fd0" stroke-width="0.9"/>
<rect x="462.00" y="41.60" width="5.4" height="1.6" fill="#3f7fd0"/>
<rect x="455.80" y="47.40" width="5.4" height="5" fill="#eaf1fa" stroke="#3f7fd0" stroke-width="0.9"/>
<rect x="455.80" y="47.40" width="5.4" height="1.6" fill="#3f7fd0"/>
<rect x="462.00" y="47.40" width="5.4" height="5" fill="#eaf1fa" stroke="#4fa84f" stroke-width="0.9"/>
<rect x="462.00" y="47.40" width="5.4" height="1.6" fill="#4fa84f"/>
<line x1="474.20" y1="39.00" x2="474.20" y2="54.00" stroke="#b4b4b4" stroke-width="0.8"/>
<rect x="477.30" y="38.00" width="17.70" height="16.40" fill="#f9f9f9" stroke="#d4d4d4" stroke-width="0.7"/>
<path d="M483.60 42.20 v9.50 M481.60 50.10 h9.50" stroke="#444" stroke-width="0.9" fill="none"/>
<path d="M486.8 43.4 l3.4 2.4 l-3.4 2.4 z" fill="#2aa52a"/>
<path d="M503.80 42.20 v9.50 M501.80 50.10 h9.50" stroke="#444" stroke-width="0.9" fill="none"/>
<path d="M507.6 42.4 v7" stroke="#4a6fa8" stroke-width="0.8"/><path d="M511.8 44.4 l-3 1.6 l3 1.6 z" fill="#d8401c"/>
<line x1="518.50" y1="39.00" x2="518.50" y2="54.00" stroke="#b4b4b4" stroke-width="0.8"/>
<path d="M525.6 41.6 h4.6 l2 2 v7.4 h-6.6 z" fill="#f4f4f4" stroke="#8a8a8a" stroke-width="0.8"/>
<path d="M527 46 l1.2 -2 l1 1.6 l1.2 -1.8" stroke="#c8a040" stroke-width="0.6" fill="none"/>
<path d="M529.30 49.60 h6.60 M532.60 46.30 v6.60" stroke="#22b522" stroke-width="2.3" stroke-linecap="round"/>
<path d="M539.00 45.50 h4 l-2 2.3 z" fill="#222"/>
<circle cx="556.6" cy="46.8" r="5" fill="#fff" stroke="#2f6fc8" stroke-width="1.7"/>
<path d="M556.6 44 v3 h2" stroke="#555" stroke-width="0.7" fill="none"/>
<path d="M565.50 45.50 h4 l-2 2.3 z" fill="#222"/>
<rect x="577.2" y="42.2" width="11.2" height="9" fill="#f2f6fb" stroke="#3f7fd0" stroke-width="1"/>
<rect x="577.6" y="42.6" width="10.4" height="1.5" fill="#5c9be0"/>
<path d="M579 47 l2.4 -1 l2.4 .8 l2.8 -1.2" stroke="#d88a3a" stroke-width="0.6" fill="none"/>
<path d="M579 49.6 l2.4 -.8 l2.4 .6 l2.8 -1" stroke="#5fae5f" stroke-width="0.6" fill="none"/>
<path d="M591.80 45.50 h4 l-2 2.3 z" fill="#222"/>
<circle cx="991" cy="45.4" r="2.7" fill="#eef5fd" stroke="#2f6fd0" stroke-width="1.3"/>
<path d="M989 47.6 l-3.4 3.2" stroke="#2f6fd0" stroke-width="1.7" stroke-linecap="round"/>
<path d="M1002.6 47.6 q0 -3 3.6 -3 q3.6 0 3.6 3 q0 2.8 -3.6 2.8 l-2.4 1.6 l.6 -1.9 q-1.8 -.7 -1.8 -2.5z" fill="#e6e9ee" stroke="#c2c7cf" stroke-width="0.6"/>
<circle cx="1012.3" cy="45.3" r="5.8" fill="#e2401c"/>
<rect x="982.90" y="23.8" width="11.90" height="11.2" fill="#fcfcfc"/>
<rect x="996.60" y="23.8" width="11.30" height="11.2" fill="#fcfcfc"/>
<rect x="1010.40" y="23.8" width="11.20" height="11.2" fill="#fcfcfc"/>
<path d="M986.4 31.4 h4" stroke="#3a6f7f" stroke-width="1.1"/>
<rect x="1000.6" y="27.2" width="4.2" height="2.8" fill="none" stroke="#3a6f7f" stroke-width="0.8"/><rect x="999.2" y="29.2" width="4.2" height="2.8" fill="#fcfcfc" stroke="#3a6f7f" stroke-width="0.8"/>
<path d="M1013.8 27.4 l4.4 4.6 M1018.2 27.4 l-4.4 4.6" stroke="#3a6f7f" stroke-width="1.1"/>
<path d="M937.9 11.1 h7.5" stroke="#444" stroke-width="0.9"/>
<rect x="970.4" y="7.4" width="7.2" height="6.6" fill="none" stroke="#333" stroke-width="0.9"/>
<path d="M1003 7.2 l7.2 7.3 M1010.2 7.2 l-7.2 7.3" stroke="#222" stroke-width="0.9"/>
<line x1="2.80" y1="59.00" x2="2.80" y2="73.00" stroke="#b0b0b0" stroke-width="1.2" stroke-dasharray="0.9 0.9"/>
<rect x="6.30" y="58.00" width="18.10" height="15.80" fill="#f9f9f9" stroke="#d4d4d4" stroke-width="0.7"/>
<path d="M12.2 61.4 v9 l2.1 -2 l1.5 3.2 l1.3 -.6 l-1.5 -3.1 l2.9 -.2 z" fill="#333"/>
<path d="M30 66.6 h10.6 M35.3 61.4 v10.4" stroke="#555" stroke-width="0.8"/>
<line x1="47.30" y1="58.50" x2="47.30" y2="73.00" stroke="#b4b4b4" stroke-width="0.8"/>
<path d="M59.4 61.9 v9.4" stroke="#555" stroke-width="0.9"/>
<path d="M75.6 66.6 h8.2" stroke="#555" stroke-width="0.9"/>
<path d="M95.8 71 l8.4 -8.6" stroke="#555" stroke-width="0.9"/>
<path d="M114.6 70 l8 -7.6 M116.2 72 l8 -7.6 M117.4 62.4 l2.4 8.6 M120 61.6 l1.6 7" stroke="#666" stroke-width="0.7"/>
<path d="M135 62.4 h9.6 M135 64.8 h9.6 M135 67.2 h9.6 M137 69.8 h5.6" stroke="#888" stroke-width="0.7" stroke-dasharray="1.2 0.5"/>
<rect x="175.6" y="62.2" width="8.8" height="8.6" fill="none" stroke="#999" stroke-width="0.7" stroke-dasharray="1 0.7"/>
<path d="M196 63.2 l2.4 -1.6 l2.2 2.4 l-2.4 1.4z M199.6 68 l2.4 -1.4 l2.2 2.4 l-2.4 1.4z" fill="#444"/>
<path d="M197 66 l3 3" stroke="#666" stroke-width="0.6"/>
<path d="M208.30 65.50 h4 l-2 2.3 z" fill="#222"/>
<line x1="216.3" y1="57" x2="216.3" y2="74.4" stroke="#d0d0d0" stroke-width="0.8"/>
<line x1="220.00" y1="59.00" x2="220.00" y2="73.00" stroke="#b0b0b0" stroke-width="1.2" stroke-dasharray="0.9 0.9"/>
<rect x="243.80" y="58.00" width="18.10" height="15.80" fill="#f9f9f9" stroke="#d4d4d4" stroke-width="0.7"/>
<line x1="403.5" y1="57" x2="403.5" y2="74.4" stroke="#d0d0d0" stroke-width="0.8"/>
<rect x="922.20" y="522" width="1.3" height="9.3" fill="#7a8f3a"/>
<rect x="922.20" y="527.30" width="1.3" height="4.00" fill="#2f5f9f"/>
<rect x="924.30" y="522" width="1.3" height="9.3" fill="#7a8f3a"/>
<rect x="924.30" y="526.55" width="1.3" height="4.75" fill="#2f5f9f"/>
<rect x="926.40" y="522" width="1.3" height="9.3" fill="#7a8f3a"/>
<rect x="926.40" y="525.80" width="1.3" height="5.50" fill="#2f5f9f"/>
<rect x="928.50" y="522" width="1.3" height="9.3" fill="#7a8f3a"/>
<rect x="928.50" y="525.05" width="1.3" height="6.25" fill="#2f5f9f"/>
<rect x="930.60" y="522" width="1.3" height="9.3" fill="#7a8f3a"/>
<rect x="930.60" y="524.30" width="1.3" height="7.00" fill="#2f5f9f"/>
<rect x="932.70" y="522" width="1.3" height="9.3" fill="#7a8f3a"/>
<rect x="932.70" y="523.55" width="1.3" height="7.75" fill="#2f5f9f"/>
<rect x="934.80" y="522" width="1.3" height="9.3" fill="#7a8f3a"/>
<rect x="934.80" y="522.80" width="1.3" height="8.50" fill="#2f5f9f"/>
<rect x="936.90" y="522" width="1.3" height="9.3" fill="#7a8f3a"/>
<rect x="936.90" y="522.05" width="1.3" height="9.25" fill="#2f5f9f"/>
<path d="M1021.5 524.5 l-8.5 8.5 M1021.5 527.5 l-5.5 5.5 M1021.5 530.5 l-2.5 2.5" stroke="#a8a8a8" stroke-width="0.9"/>
</svg>
<span class="t" id="t0" style="left:8.20px;top:6.70px;height:7.00px;line-height:7.00px;font-size:5.00px;color:#e8e8e8;font-weight:bold;transform:scaleX(0.9867);">XM</span>
<span class="t" id="t1" style="left:60.00px;top:5.58px;height:12.04px;line-height:12.04px;font-size:8.60px;color:#1c1c1c;transform:scaleX(0.9598);">: XMTradingMU-Demo 6 - デモ口座 - FinTrade Limited - [AUDCAD,M5]</span>
<span class="t" id="t2" style="left:20.60px;top:23.88px;height:12.04px;line-height:12.04px;font-size:8.60px;color:#111;transform:scaleX(0.6746);">ファイル</span>
<span class="t" id="t3" style="left:48.10px;top:23.18px;height:12.04px;line-height:12.04px;font-size:8.60px;color:#111;transform:scaleX(0.8011);">(F)</span>
<span class="t" id="t4" style="left:70.60px;top:23.18px;height:12.04px;line-height:12.04px;font-size:8.60px;color:#111;transform:scaleX(0.9126);">表示</span>
<span class="t" id="t5" style="left:90.30px;top:23.18px;height:12.04px;line-height:12.04px;font-size:8.60px;color:#111;transform:scaleX(0.7935);">(V)</span>
<span class="t" id="t6" style="left:113.00px;top:23.88px;height:12.04px;line-height:12.04px;font-size:8.60px;color:#111;transform:scaleX(0.9591);">挿入</span>
<span class="t" id="t7" style="left:130.20px;top:23.18px;height:12.04px;line-height:12.04px;font-size:8.60px;color:#111;transform:scaleX(0.8985);">(I)</span>
<span class="t" id="t8" style="left:150.80px;top:23.88px;height:12.04px;line-height:12.04px;font-size:8.60px;color:#111;transform:scaleX(0.6706);">チャート</span>
<span class="t" id="t9" style="left:177.00px;top:23.18px;height:12.04px;line-height:12.04px;font-size:8.60px;color:#111;transform:scaleX(0.8377);">(C)</span>
<span class="t" id="t10" style="left:200.00px;top:23.88px;height:12.04px;line-height:12.04px;font-size:8.60px;color:#111;transform:scaleX(0.7288);">ツール</span>
<span class="t" id="t11" style="left:222.00px;top:23.18px;height:12.04px;line-height:12.04px;font-size:8.60px;color:#111;transform:scaleX(0.8467);">(T)</span>
<span class="t" id="t12" style="left:244.50px;top:23.88px;height:12.04px;line-height:12.04px;font-size:8.60px;color:#111;transform:scaleX(0.6816);">ウィンドウ</span>
<span class="t" id="t13" style="left:277.00px;top:23.18px;height:12.04px;line-height:12.04px;font-size:8.60px;color:#111;transform:scaleX(0.9391);">(W)</span>
<span class="t" id="t14" style="left:303.00px;top:23.88px;height:12.04px;line-height:12.04px;font-size:8.60px;color:#111;transform:scaleX(0.7869);">ヘルプ</span>
<span class="t" id="t15" style="left:326.30px;top:23.18px;height:12.04px;line-height:12.04px;font-size:8.60px;color:#111;transform:scaleX(0.9382);">(H)</span>
<span class="t" id="t16" style="left:185.60px;top:41.08px;height:12.04px;line-height:12.04px;font-size:8.60px;color:#111;font-weight:500;transform:scaleX(0.9421);">新規注文</span>
<span class="t" id="t17" style="left:302.90px;top:41.08px;height:12.04px;line-height:12.04px;font-size:8.60px;color:#111;font-weight:500;transform:scaleX(0.9625);">自動売買</span>
<span class="t" id="t18" style="left:227.80px;top:61.62px;height:10.36px;line-height:10.36px;font-size:7.40px;color:#3c3c3c;transform:scaleX(0.8267);">M1</span>
<span class="t" id="t19" style="left:247.80px;top:61.62px;height:10.36px;line-height:10.36px;font-size:7.40px;color:#3c3c3c;transform:scaleX(0.8851);">M5</span>
<span class="t" id="t20" style="left:266.00px;top:61.62px;height:10.36px;line-height:10.36px;font-size:7.40px;color:#3c3c3c;transform:scaleX(0.9034);">M15</span>
<span class="t" id="t21" style="left:286.00px;top:61.62px;height:10.36px;line-height:10.36px;font-size:7.40px;color:#3c3c3c;transform:scaleX(0.8895);">M30</span>
<span class="t" id="t22" style="left:308.00px;top:61.62px;height:10.36px;line-height:10.36px;font-size:7.40px;color:#3c3c3c;transform:scaleX(0.8780);">H1</span>
<span class="t" id="t23" style="left:327.50px;top:61.62px;height:10.36px;line-height:10.36px;font-size:7.40px;color:#3c3c3c;transform:scaleX(0.9309);">H4</span>
<span class="t" id="t24" style="left:348.00px;top:61.62px;height:10.36px;line-height:10.36px;font-size:7.40px;color:#3c3c3c;transform:scaleX(0.8780);">D1</span>
<span class="t" id="t25" style="left:368.00px;top:61.62px;height:10.36px;line-height:10.36px;font-size:7.40px;color:#3c3c3c;transform:scaleX(0.9014);">W1</span>
<span class="t" id="t26" style="left:387.30px;top:61.62px;height:10.36px;line-height:10.36px;font-size:7.40px;color:#3c3c3c;transform:scaleX(0.8870);">MN</span>
<span class="t" id="t27" style="left:15.00px;top:79.24px;height:9.52px;line-height:9.52px;font-size:6.80px;color:#fff;transform:scaleX(1.0142);-webkit-text-stroke:0.18px #fff;">AUDCAD,M5</span>
<span class="t" id="t28" style="left:918.00px;top:80.54px;height:9.52px;line-height:9.52px;font-size:6.80px;color:#fff;transform:scaleX(1.0267);-webkit-text-stroke:0.18px #fff;">BALANCEA_Ver.S</span>
<span class="t" id="t29" style="left:8.60px;top:152.14px;height:9.52px;line-height:9.52px;font-size:6.80px;color:#e8e8e8;transform:scaleX(0.7918);">A</span>
<span class="t" id="t30" style="left:44.00px;top:152.14px;height:9.52px;line-height:9.52px;font-size:6.80px;color:#e8e8e8;transform:scaleX(0.9436);-webkit-text-stroke:0.2px #e8e8e8;">sell 0.03</span>
<span class="t" id="t31" style="left:992.80px;top:90.94px;height:9.52px;line-height:9.52px;font-size:6.80px;color:#fff;transform:scaleX(0.9561);-webkit-text-stroke:0.18px #fff;">0.91955</span>
<span class="t" id="t32" style="left:992.80px;top:118.82px;height:9.52px;line-height:9.52px;font-size:6.80px;color:#fff;transform:scaleX(0.9561);-webkit-text-stroke:0.18px #fff;">0.91930</span>
<span class="t" id="t33" style="left:992.80px;top:145.62px;height:9.52px;line-height:9.52px;font-size:6.80px;color:#fff;transform:scaleX(0.9561);-webkit-text-stroke:0.18px #fff;">0.91905</span>
<span class="t" id="t34" style="left:992.80px;top:172.96px;height:9.52px;line-height:9.52px;font-size:6.80px;color:#fff;transform:scaleX(0.9561);-webkit-text-stroke:0.18px #fff;">0.91880</span>
<span class="t" id="t35" style="left:992.80px;top:200.86px;height:9.52px;line-height:9.52px;font-size:6.80px;color:#fff;transform:scaleX(0.9561);-webkit-text-stroke:0.18px #fff;">0.91855</span>
<span class="t" id="t36" style="left:992.80px;top:227.64px;height:9.52px;line-height:9.52px;font-size:6.80px;color:#fff;transform:scaleX(0.9561);-webkit-text-stroke:0.18px #fff;">0.91830</span>
<span class="t" id="t37" style="left:992.80px;top:254.98px;height:9.52px;line-height:9.52px;font-size:6.80px;color:#fff;transform:scaleX(0.9561);-webkit-text-stroke:0.18px #fff;">0.91805</span>
<span class="t" id="t38" style="left:992.80px;top:282.90px;height:9.52px;line-height:9.52px;font-size:6.80px;color:#fff;transform:scaleX(0.9561);-webkit-text-stroke:0.18px #fff;">0.91780</span>
<span class="t" id="t39" style="left:992.80px;top:309.66px;height:9.52px;line-height:9.52px;font-size:6.80px;color:#fff;transform:scaleX(0.9561);-webkit-text-stroke:0.18px #fff;">0.91755</span>
<span class="t" id="t40" style="left:992.60px;top:287.74px;height:9.52px;line-height:9.52px;font-size:6.80px;color:#000;transform:scaleX(0.9602);">0.91775</span>
<span class="t" id="t41" style="left:3.34px;top:322.14px;height:9.52px;line-height:9.52px;font-size:6.80px;color:#fff;transform:scaleX(0.9800);-webkit-text-stroke:0.18px #fff;">7 Oct 2025</span>
<span class="t" id="t42" style="left:49.07px;top:322.14px;height:9.52px;line-height:9.52px;font-size:6.80px;color:#fff;transform:scaleX(0.9903);-webkit-text-stroke:0.18px #fff;">7 Oct 17:20</span>
<span class="t" id="t43" style="left:94.80px;top:322.14px;height:9.52px;line-height:9.52px;font-size:6.80px;color:#fff;transform:scaleX(0.9903);-webkit-text-stroke:0.18px #fff;">7 Oct 17:40</span>
<span class="t" id="t44" style="left:140.52px;top:322.14px;height:9.52px;line-height:9.52px;font-size:6.80px;color:#fff;transform:scaleX(0.9903);-webkit-text-stroke:0.18px #fff;">7 Oct 18:00</span>
<span class="t" id="t45" style="left:186.25px;top:322.14px;height:9.52px;line-height:9.52px;font-size:6.80px;color:#fff;transform:scaleX(0.9903);-webkit-text-stroke:0.18px #fff;">7 Oct 18:20</span>
<span class="t" id="t46" style="left:231.98px;top:322.14px;height:9.52px;line-height:9.52px;font-size:6.80px;color:#fff;transform:scaleX(0.9903);-webkit-text-stroke:0.18px #fff;">7 Oct 18:40</span>
<span class="t" id="t47" style="left:277.71px;top:322.14px;height:9.52px;line-height:9.52px;font-size:6.80px;color:#fff;transform:scaleX(0.9903);-webkit-text-stroke:0.18px #fff;">7 Oct 19:00</span>
<span class="t" id="t48" style="left:323.44px;top:322.14px;height:9.52px;line-height:9.52px;font-size:6.80px;color:#fff;transform:scaleX(0.9903);-webkit-text-stroke:0.18px #fff;">7 Oct 19:20</span>
<span class="t" id="t49" style="left:369.16px;top:322.14px;height:9.52px;line-height:9.52px;font-size:6.80px;color:#fff;transform:scaleX(0.9903);-webkit-text-stroke:0.18px #fff;">7 Oct 19:40</span>
<span class="t" id="t50" style="left:414.89px;top:322.14px;height:9.52px;line-height:9.52px;font-size:6.80px;color:#fff;transform:scaleX(0.9903);-webkit-text-stroke:0.18px #fff;">7 Oct 20:00</span>
<span class="t" id="t51" style="left:460.62px;top:322.14px;height:9.52px;line-height:9.52px;font-size:6.80px;color:#fff;transform:scaleX(0.9903);-webkit-text-stroke:0.18px #fff;">7 Oct 20:20</span>
<span class="t" id="t52" style="left:506.35px;top:322.14px;height:9.52px;line-height:9.52px;font-size:6.80px;color:#fff;transform:scaleX(0.9903);-webkit-text-stroke:0.18px #fff;">7 Oct 20:40</span>
<span class="t" id="t53" style="left:552.08px;top:322.14px;height:9.52px;line-height:9.52px;font-size:6.80px;color:#fff;transform:scaleX(0.9903);-webkit-text-stroke:0.18px #fff;">7 Oct 21:00</span>
<span class="t" id="t54" style="left:597.80px;top:322.14px;height:9.52px;line-height:9.52px;font-size:6.80px;color:#fff;transform:scaleX(0.9903);-webkit-text-stroke:0.18px #fff;">7 Oct 21:20</span>
<span class="t" id="t55" style="left:643.53px;top:322.14px;height:9.52px;line-height:9.52px;font-size:6.80px;color:#fff;transform:scaleX(0.9903);-webkit-text-stroke:0.18px #fff;">7 Oct 21:40</span>
<span class="t" id="t56" style="left:689.26px;top:322.14px;height:9.52px;line-height:9.52px;font-size:6.80px;color:#fff;transform:scaleX(0.9903);-webkit-text-stroke:0.18px #fff;">7 Oct 22:00</span>
<span class="t" id="t57" style="left:734.99px;top:322.14px;height:9.52px;line-height:9.52px;font-size:6.80px;color:#fff;transform:scaleX(0.9903);-webkit-text-stroke:0.18px #fff;">7 Oct 22:20</span>
<span class="t" id="t58" style="left:780.72px;top:322.14px;height:9.52px;line-height:9.52px;font-size:6.80px;color:#fff;transform:scaleX(0.9903);-webkit-text-stroke:0.18px #fff;">7 Oct 22:40</span>
<span class="t" id="t59" style="left:826.44px;top:322.14px;height:9.52px;line-height:9.52px;font-size:6.80px;color:#fff;transform:scaleX(0.9903);-webkit-text-stroke:0.18px #fff;">7 Oct 23:00</span>
<span class="t" id="t60" style="left:872.17px;top:322.14px;height:9.52px;line-height:9.52px;font-size:6.80px;color:#fff;transform:scaleX(0.9903);-webkit-text-stroke:0.18px #fff;">7 Oct 23:20</span>
<span class="t" id="t61" style="left:917.90px;top:322.14px;height:9.52px;line-height:9.52px;font-size:6.80px;color:#fff;transform:scaleX(0.9903);-webkit-text-stroke:0.18px #fff;">7 Oct 23:40</span>
<span class="t" id="t62" style="left:963.63px;top:322.14px;height:9.52px;line-height:9.52px;font-size:6.80px;color:#fff;transform:scaleX(0.9903);-webkit-text-stroke:0.18px #fff;">8 Oct 00:00</span>
<span class="t" id="t63" style="left:3.20px;top:336.90px;height:12.60px;line-height:12.60px;font-size:9.00px;color:#111;font-weight:bold;transform:scaleX(0.9116);">×</span>
<span class="t" id="t64" style="left:16.90px;top:342.65px;height:11.90px;line-height:11.90px;font-size:8.50px;color:#1a1a1a;transform:scaleX(0.9731);">注文番号</span>
<span class="t" id="t65" style="left:59.30px;top:343.80px;height:9.80px;line-height:9.80px;font-size:7.00px;color:#666;transform:scaleX(1.2800);">/</span>
<span class="t" id="t66" style="left:228.80px;top:342.65px;height:11.90px;line-height:11.90px;font-size:8.50px;color:#1a1a1a;transform:scaleX(0.9697);">時間</span>
<span class="t" id="t67" style="left:281.30px;top:342.65px;height:11.90px;line-height:11.90px;font-size:8.50px;color:#1a1a1a;transform:scaleX(0.9760);">取引種別</span>
<span class="t" id="t68" style="left:351.30px;top:342.65px;height:11.90px;line-height:11.90px;font-size:8.50px;color:#1a1a1a;transform:scaleX(0.9815);">数量</span>
<span class="t" id="t69" style="left:406.30px;top:342.65px;height:11.90px;line-height:11.90px;font-size:8.50px;color:#1a1a1a;transform:scaleX(0.9172);">通貨ペア</span>
<span class="t" id="t70" style="left:497.00px;top:342.65px;height:11.90px;line-height:11.90px;font-size:8.50px;color:#1a1a1a;transform:scaleX(0.9403);">価格</span>
<span class="t" id="t71" style="left:528.80px;top:342.65px;height:11.90px;line-height:11.90px;font-size:8.50px;color:#1a1a1a;">決済逆指値(S/L)</span>
<span class="t" id="t72" style="left:613.30px;top:342.65px;height:11.90px;line-height:11.90px;font-size:8.50px;color:#1a1a1a;">決済指値(T/P)</span>
<span class="t" id="t73" style="left:725.50px;top:342.65px;height:11.90px;line-height:11.90px;font-size:8.50px;color:#1a1a1a;transform:scaleX(0.9579);">価格</span>
<span class="t" id="t74" style="left:793.80px;top:342.65px;height:11.90px;line-height:11.90px;font-size:8.50px;color:#1a1a1a;transform:scaleX(0.9798);">手数料</span>
<span class="t" id="t75" style="left:870.50px;top:341.85px;height:11.90px;line-height:11.90px;font-size:8.50px;color:#1a1a1a;transform:scaleX(0.7350);">スワップ</span>
<span class="t" id="t76" style="left:1000.00px;top:342.65px;height:11.90px;line-height:11.90px;font-size:8.50px;color:#1a1a1a;transform:scaleX(0.9403);">損益</span>
<span class="t" id="t77" style="left:176.90px;top:359.16px;height:11.48px;line-height:11.48px;font-size:8.20px;color:#000;transform:scaleX(0.9398);">2025.10.06 16:55:02</span>
<span class="t" id="t78" style="left:302.00px;top:359.16px;height:11.48px;line-height:11.48px;font-size:8.20px;color:#000;transform:scaleX(0.9846);">buy</span>
<span class="t" id="t79" style="left:354.50px;top:359.16px;height:11.48px;line-height:11.48px;font-size:8.20px;color:#000;transform:scaleX(0.9412);">0.03</span>
<span class="t" id="t80" style="left:410.50px;top:359.16px;height:11.48px;line-height:11.48px;font-size:8.20px;color:#000;transform:scaleX(1.0047);">audcad</span>
<span class="t" id="t81" style="left:487.00px;top:359.16px;height:11.48px;line-height:11.48px;font-size:8.20px;color:#000;transform:scaleX(0.9288);">0.92422</span>
<span class="t" id="t82" style="left:563.30px;top:359.16px;height:11.48px;line-height:11.48px;font-size:8.20px;color:#000;transform:scaleX(0.9288);">0.00000</span>
<span class="t" id="t83" style="left:639.80px;top:359.16px;height:11.48px;line-height:11.48px;font-size:8.20px;color:#000;transform:scaleX(0.9355);">0.00000</span>
<span class="t" id="t84" style="left:716.30px;top:359.16px;height:11.48px;line-height:11.48px;font-size:8.20px;color:#000;transform:scaleX(0.9288);">0.91775</span>
<span class="t" id="t85" style="left:815.70px;top:359.16px;height:11.48px;line-height:11.48px;font-size:8.20px;color:#000;transform:scaleX(0.9425);">0</span>
<span class="t" id="t86" style="left:889.70px;top:359.16px;height:11.48px;line-height:11.48px;font-size:8.20px;color:#000;transform:scaleX(0.9339);">-8</span>
<span class="t" id="t87" style="left:980.90px;top:359.16px;height:11.48px;line-height:11.48px;font-size:8.20px;color:#000;transform:scaleX(0.9952);">-2 113</span>
<span class="t" id="t88" style="left:1009.90px;top:357.30px;height:13.30px;line-height:13.30px;font-size:9.50px;color:#888;transform:scaleX(1.0966);">×</span>
<span class="t" id="t89" style="left:176.90px;top:372.51px;height:11.48px;line-height:11.48px;font-size:8.20px;color:#000;transform:scaleX(0.9398);">2025.10.07 09:23:45</span>
<span class="t" id="t90" style="left:302.00px;top:372.51px;height:11.48px;line-height:11.48px;font-size:8.20px;color:#000;transform:scaleX(0.9846);">buy</span>
<span class="t" id="t91" style="left:354.50px;top:372.51px;height:11.48px;line-height:11.48px;font-size:8.20px;color:#000;transform:scaleX(0.9412);">0.05</span>
<span class="t" id="t92" style="left:410.50px;top:372.51px;height:11.48px;line-height:11.48px;font-size:8.20px;color:#000;transform:scaleX(1.0047);">audcad</span>
<span class="t" id="t93" style="left:487.00px;top:372.51px;height:11.48px;line-height:11.48px;font-size:8.20px;color:#000;transform:scaleX(0.9288);">0.92054</span>
<span class="t" id="t94" style="left:563.30px;top:372.51px;height:11.48px;line-height:11.48px;font-size:8.20px;color:#000;transform:scaleX(0.9288);">0.00000</span>
<span class="t" id="t95" style="left:639.80px;top:372.51px;height:11.48px;line-height:11.48px;font-size:8.20px;color:#000;transform:scaleX(0.9355);">0.00000</span>
<span class="t" id="t96" style="left:716.30px;top:372.51px;height:11.48px;line-height:11.48px;font-size:8.20px;color:#000;transform:scaleX(0.9288);">0.91775</span>
<span class="t" id="t97" style="left:815.70px;top:372.51px;height:11.48px;line-height:11.48px;font-size:8.20px;color:#000;transform:scaleX(0.9425);">0</span>
<span class="t" id="t98" style="left:889.70px;top:372.51px;height:11.48px;line-height:11.48px;font-size:8.20px;color:#000;transform:scaleX(0.9339);">-7</span>
<span class="t" id="t99" style="left:980.90px;top:372.51px;height:11.48px;line-height:11.48px;font-size:8.20px;color:#000;transform:scaleX(0.9690);">-1 518</span>
<span class="t" id="t100" style="left:1009.90px;top:370.85px;height:13.30px;line-height:13.30px;font-size:9.50px;color:#888;transform:scaleX(1.0966);">×</span>
<span class="t" id="t101" style="left:176.90px;top:387.91px;height:11.48px;line-height:11.48px;font-size:8.20px;color:#000;transform:scaleX(0.9398);">2025.10.07 15:20:00</span>
<span class="t" id="t102" style="left:303.20px;top:387.91px;height:11.48px;line-height:11.48px;font-size:8.20px;color:#000;transform:scaleX(0.9596);">sell</span>
<span class="t" id="t103" style="left:354.50px;top:387.91px;height:11.48px;line-height:11.48px;font-size:8.20px;color:#000;transform:scaleX(0.9412);">0.03</span>
<span class="t" id="t104" style="left:410.50px;top:387.91px;height:11.48px;line-height:11.48px;font-size:8.20px;color:#000;transform:scaleX(1.0047);">audcad</span>
<span class="t" id="t105" style="left:487.00px;top:387.91px;height:11.48px;line-height:11.48px;font-size:8.20px;color:#000;transform:scaleX(0.9288);">0.91895</span>
<span class="t" id="t106" style="left:563.30px;top:387.91px;height:11.48px;line-height:11.48px;font-size:8.20px;color:#000;transform:scaleX(0.9288);">0.00000</span>
<span class="t" id="t107" style="left:639.80px;top:387.91px;height:11.48px;line-height:11.48px;font-size:8.20px;color:#000;transform:scaleX(0.9355);">0.00000</span>
<span class="t" id="t108" style="left:716.30px;top:387.91px;height:11.48px;line-height:11.48px;font-size:8.20px;color:#000;transform:scaleX(0.9288);">0.91908</span>
<span class="t" id="t109" style="left:815.70px;top:387.91px;height:11.48px;line-height:11.48px;font-size:8.20px;color:#000;transform:scaleX(0.9425);">0</span>
<span class="t" id="t110" style="left:885.00px;top:387.91px;height:11.48px;line-height:11.48px;font-size:8.20px;color:#000;transform:scaleX(0.9710);">-21</span>
<span class="t" id="t111" style="left:992.20px;top:387.91px;height:11.48px;line-height:11.48px;font-size:8.20px;color:#000;transform:scaleX(0.9456);">-42</span>
<span class="t" id="t112" style="left:1009.90px;top:385.90px;height:13.30px;line-height:13.30px;font-size:9.50px;color:#888;transform:scaleX(1.0966);">×</span>
<span class="t" id="t113" style="left:28.00px;top:401.62px;height:11.76px;line-height:11.76px;font-size:8.40px;color:#111;font-weight:bold;transform:scaleX(0.9362);">残高:</span>
<span class="t" id="t114" style="left:49.00px;top:401.62px;height:11.76px;line-height:11.76px;font-size:8.40px;color:#111;font-weight:bold;transform:scaleX(0.9563);">1 032 740 JPY</span>
<span class="t" id="t115" style="left:107.00px;top:401.62px;height:11.76px;line-height:11.76px;font-size:8.40px;color:#111;font-weight:bold;transform:scaleX(0.9917);">有効証拠金:</span>
<span class="t" id="t116" style="left:153.80px;top:401.62px;height:11.76px;line-height:11.76px;font-size:8.40px;color:#111;font-weight:bold;transform:scaleX(0.9714);">1 029 031</span>
<span class="t" id="t117" style="left:195.00px;top:401.62px;height:11.76px;line-height:11.76px;font-size:8.40px;color:#111;font-weight:bold;transform:scaleX(0.9760);">必要証拠金:</span>
<span class="t" id="t118" style="left:241.30px;top:401.62px;height:11.76px;line-height:11.76px;font-size:8.40px;color:#111;font-weight:bold;transform:scaleX(1.0226);">497</span>
<span class="t" id="t119" style="left:260.50px;top:401.62px;height:11.76px;line-height:11.76px;font-size:8.40px;color:#111;font-weight:bold;">余剰証拠金:</span>
<span class="t" id="t120" style="left:306.90px;top:401.62px;height:11.76px;line-height:11.76px;font-size:8.40px;color:#111;font-weight:bold;transform:scaleX(1.0170);">1 028 534</span>
<span class="t" id="t121" style="left:350.00px;top:401.62px;height:11.76px;line-height:11.76px;font-size:8.40px;color:#111;font-weight:bold;transform:scaleX(1.0067);">証拠金維持率:</span>
<span class="t" id="t122" style="left:405.30px;top:401.62px;height:11.76px;line-height:11.76px;font-size:8.40px;color:#111;font-weight:bold;transform:scaleX(1.0054);">207048.49%</span>
<span class="t" id="t123" style="left:979.00px;top:401.62px;height:11.76px;line-height:11.76px;font-size:8.40px;color:#111;font-weight:bold;transform:scaleX(1.0274);">-3 709</span>
<span class="t" id="t124" style="left:21.50px;top:501.25px;height:11.90px;line-height:11.90px;font-size:8.50px;color:#111;transform:scaleX(0.9403);">取引</span>
<span class="t" id="t125" style="left:52.40px;top:501.25px;height:11.90px;line-height:11.90px;font-size:8.50px;color:#606060;">運用比率</span>
<span class="t" id="t126" style="left:102.00px;top:501.25px;height:11.90px;line-height:11.90px;font-size:8.50px;color:#606060;transform:scaleX(0.9701);">口座履歴</span>
<span class="t" id="t127" style="left:150.00px;top:501.25px;height:11.90px;line-height:11.90px;font-size:8.50px;color:#606060;transform:scaleX(0.6850);">ニュース</span>
<span class="t" id="t128" style="left:188.00px;top:501.25px;height:11.90px;line-height:11.90px;font-size:8.50px;color:#606060;transform:scaleX(0.8039);">アラーム設定</span>
<span class="t" id="t129" style="left:243.80px;top:501.35px;height:11.90px;line-height:11.90px;font-size:8.50px;color:#606060;transform:scaleX(0.7460);">メールボックス</span>
<span class="t" id="t130" style="left:308.00px;top:501.35px;height:11.90px;line-height:11.90px;font-size:8.50px;color:#606060;transform:scaleX(0.6892);">マーケット</span>
<span class="t" id="t131" style="left:363.50px;top:501.25px;height:11.90px;line-height:11.90px;font-size:8.50px;color:#606060;transform:scaleX(0.9579);">記事</span>
<span class="t" id="t132" style="left:399.00px;top:501.35px;height:11.90px;line-height:11.90px;font-size:8.50px;color:#606060;transform:scaleX(0.7056);">ライブラリ</span>
<span class="t" id="t133" style="left:444.00px;top:501.25px;height:11.90px;line-height:11.90px;font-size:8.50px;color:#606060;transform:scaleX(0.7291);">エキスパート</span>
<span class="t" id="t134" style="left:496.30px;top:501.25px;height:11.90px;line-height:11.90px;font-size:8.50px;color:#606060;transform:scaleX(0.9907);">操作履歴</span>
<span class="t" id="t135" style="left:289.40px;top:503.64px;height:9.52px;line-height:9.52px;font-size:6.80px;color:#e02010;font-weight:bold;transform:scaleX(0.8992);">6</span>
<span class="t" id="t136" style="left:339.30px;top:503.64px;height:9.52px;line-height:9.52px;font-size:6.80px;color:#e02010;font-weight:bold;transform:scaleX(0.8110);">105</span>
<span class="t" id="t137" style="left:381.90px;top:503.64px;height:9.52px;line-height:9.52px;font-size:6.80px;color:#e02010;font-weight:bold;transform:scaleX(0.8727);">9</span>
<span class="t" id="t138" style="left:156.90px;top:61.72px;height:11.76px;line-height:11.76px;font-size:8.40px;color:#666;font-weight:bold;transform:scaleX(0.9237);">A</span>
<span class="t" id="t139" style="left:177.70px;top:62.08px;height:10.64px;line-height:10.64px;font-size:7.60px;color:#555;font-weight:bold;transform:scaleX(1.0343);">T</span>
<span class="t" id="t140" style="left:122.60px;top:68.78px;height:6.44px;line-height:6.44px;font-size:4.60px;color:#444;font-weight:bold;transform:scaleX(0.9746);">E</span>
<span class="t" id="t141" style="left:142.60px;top:68.78px;height:6.44px;line-height:6.44px;font-size:4.60px;color:#444;font-weight:bold;transform:scaleX(0.9956);">F</span>
<span class="t" id="t142" style="left:1010.40px;top:39.80px;height:11.20px;line-height:11.20px;font-size:8.00px;color:#fff;font-weight:bold;transform:scaleX(0.8084);">1</span>
<span class="t" id="t143" style="left:2.60px;top:521.85px;height:11.90px;line-height:11.90px;font-size:8.50px;color:#111;transform:scaleX(0.8230);">F1キーでヘルプが表示されます</span>
<span class="t" id="t144" style="left:520.00px;top:521.99px;height:11.62px;line-height:11.62px;font-size:8.30px;color:#111;">Default</span>
<span class="t" id="t145" style="left:941.80px;top:521.99px;height:11.62px;line-height:11.62px;font-size:8.30px;color:#111;transform:scaleX(0.9562);">267134/260 kb</span>
</div></body></html>
